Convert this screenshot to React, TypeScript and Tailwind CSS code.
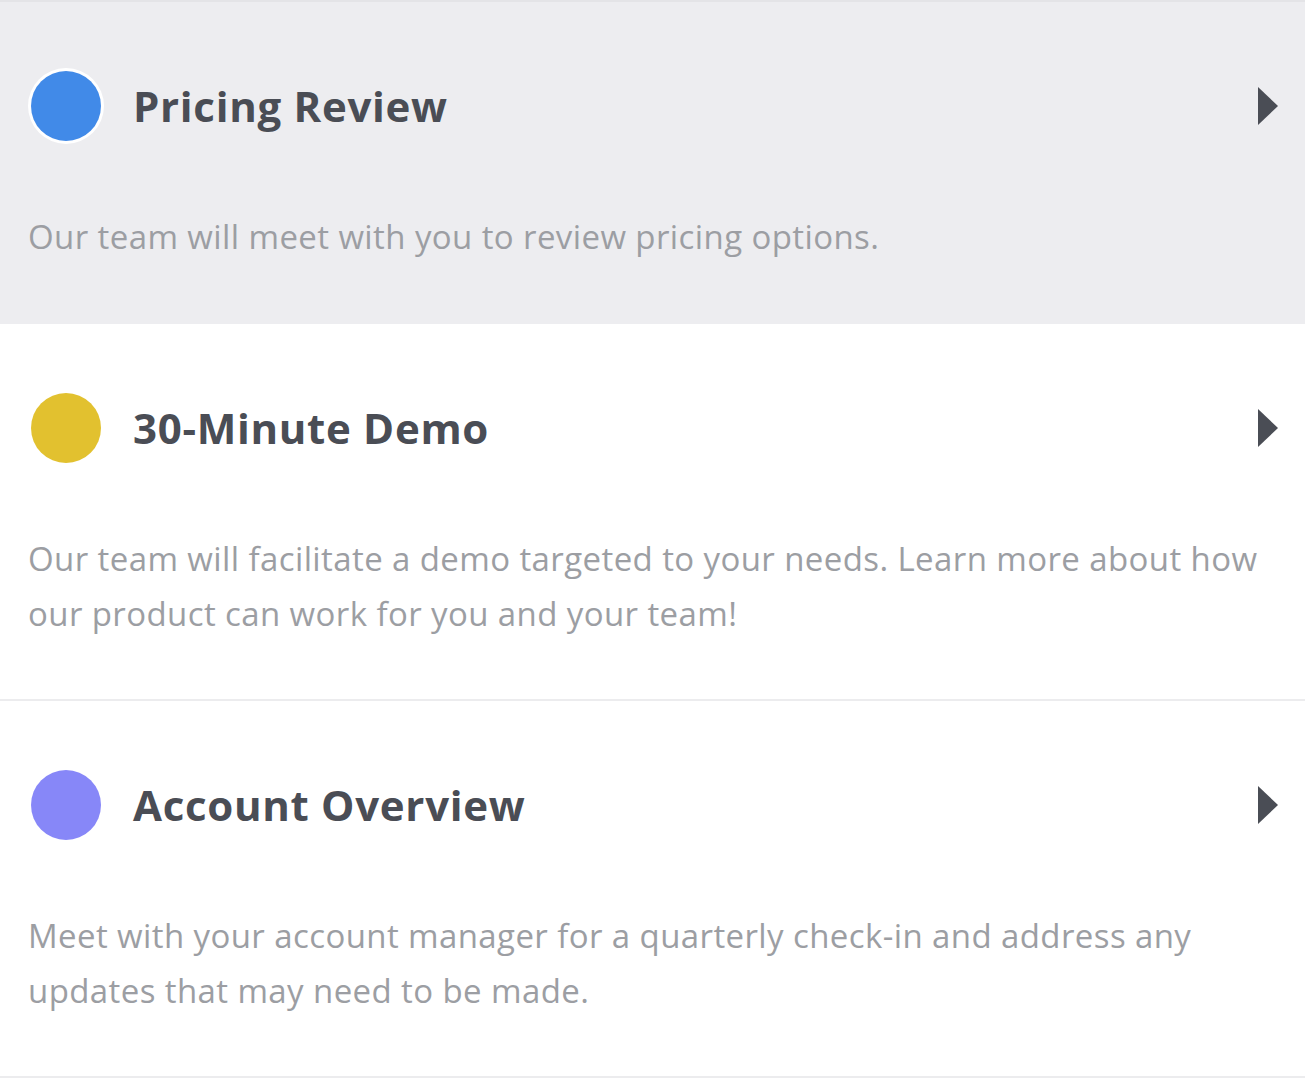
const items = [
  {
    title: 'Pricing Review',
    desc: 'Our team will meet with you to review pricing options.',
    dot: 'bg-[#418ae8]',
    active: true,
  },
  {
    title: '30-Minute Demo',
    desc: 'Our team will facilitate a demo targeted to your needs. Learn more about how our product can work for you and your team!',
    dot: 'bg-[#e2c12f]',
    active: false,
  },
  {
    title: 'Account Overview',
    desc: 'Meet with your account manager for a quarterly check-in and address any updates that may need to be made.',
    dot: 'bg-[#8787f8]',
    active: false,
  },
];

function Arrow() {
  return (
    <svg width="22" height="40" viewBox="0 0 22 40" className="shrink-0">
      <path d="M1 1 L21 20 L1 39 Z" fill="#4a4d55" />
    </svg>
  );
}

export default function App() {
  return (
    <div className="w-[1305px] min-h-[1081px] bg-white font-['Open_Sans',sans-serif] border-t-2 border-[#e4e4e7]">
      {items.map((item) => (
        <div
          key={item.title}
          className={`pt-[69px] pb-[58px] pl-[31px] pr-[26px] border-b-2 ${
            item.active ? 'bg-[#ededf0] border-[#ededf0]' : 'bg-white border-[#ececee]'
          }`}
        >
          <div className="flex items-center h-[70px]">
            <div
              className={`w-[70px] h-[70px] rounded-full shrink-0 ${item.dot} ${
                item.active ? 'ring-[3px] ring-white' : ''
              }`}
            />
            <h2 className="ml-[32px] text-[42px] font-bold text-[#4a4d55] tracking-[0.7px] flex-1 leading-none">
              {item.title}
            </h2>
            <Arrow />
          </div>
          <p className="mt-[68px] -ml-[3px] text-[33px] leading-[55px] tracking-[0.4px] text-[#9c9ea3]">
            {item.desc}
          </p>
        </div>
      ))}
    </div>
  );
}
